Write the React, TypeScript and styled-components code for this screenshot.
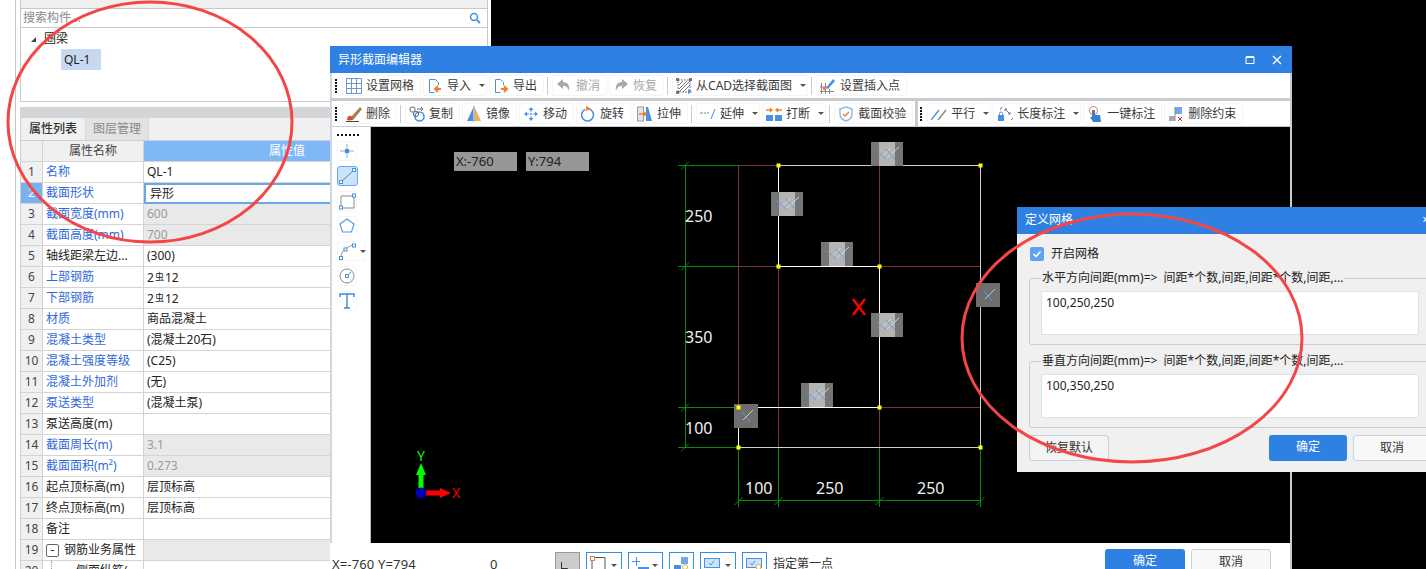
import React from "react";
import styled, { createGlobalStyle } from "styled-components";

const FONT = `"Noto Sans", "Noto Sans CJK SC", sans-serif`;

const Global = createGlobalStyle`
  html, body { margin: 0; padding: 0; height: 100%; overflow: hidden; background: #000; }
  body { font: 12px/20px ${FONT}; color: #222; }
  * { box-sizing: border-box; }
`;

const Page = styled.div`
  position: relative; width: 1426px; height: 569px; overflow: hidden; background: #000; display: flex;
`;
const LeftColumn = styled.div`
  width: 491px; height: 100%; background: #fff; display: flex; flex: none; overflow: hidden;
`;
const Rail = styled.div`
  width: 16px; flex: none; border-right: 1px solid #c4c4c4; margin-right: 4px;
`;
const Panel = styled.div`
  width: 468px; display: flex; flex-direction: column; flex: none;
  & > * { flex: none; }
`;
const TopStrip = styled.div`
  height: 9px; background: #f0f0f0; border: 1px solid #c8c8c8; border-top: 0;
`;
const SearchBar = styled.div`
  height: 19px; display: flex; align-items: center; justify-content: space-between;
  padding: 0 6px 0 2px; border-left: 1px solid #c8c8c8; border-right: 1px solid #c8c8c8; border-bottom: 1px solid #c8c8c8;
  color: #8a8a8a; font-size: 12px;
`;
const Tree = styled.div`
  height: 74px; border: 1px solid #c8c8c8; border-top: 0; padding-top: 1px;
`;
const TreeParent = styled.div`
  height: 20px; display: flex; align-items: center; padding-left: 10px; gap: 8px;
`;
const Triangle = styled.span`
  width: 0; height: 0; border-left: 5px solid transparent; border-bottom: 5px solid #444;
`;
const TreeLeaf = styled.div`
  margin-left: 40px; width: 40px; height: 21px; background: #c8d8f0; padding-left: 3px; line-height: 21px;
`;
const GreyBar = styled.div`
  height: 11px; margin-top: 5px; background: #d4d5d9;
`;
const Tabs = styled.div`
  height: 22px; background: #f0f0f0; display: flex; border-left: 1px solid #d0d0d0;
`;
const Tab = styled.div<{ $active?: boolean }>`
  width: 64px; text-align: center; line-height: 22px; font-weight: ${p => (p.$active ? 500 : 400)};
  background: ${p => (p.$active ? "#f0f0f0" : "#e3e3e3")};
  color: ${p => (p.$active ? "#333" : "#8a8a8a")};
  ${p => (p.$active ? "" : "border-left: 1px solid #d8d8d8; border-right: 1px solid #d8d8d8;")}
`;
const Table = styled.div`
  border-left: 1px solid #d0d0d0; border-top: 1px solid #d0d0d0;
`;
const Row = styled.div`
  display: flex; height: 21px;
`;
const NumCell = styled.div<{ $selected?: boolean }>`
  width: 22px; flex: none; text-align: center; line-height: 20px; color: ${p => (p.$selected ? "#fff" : "#444")};
  background: ${p => (p.$selected ? "#78b2f0" : "#f0f0f0")};
  border-right: 1px solid #d4d4d4; border-bottom: 1px solid #d4d4d4;
`;
const NameCell = styled.div<{ $link?: boolean }>`
  width: 101px; flex: none; padding-left: 3px; white-space: nowrap; overflow: hidden; line-height: 20px;
  color: ${p => (p.$link ? "#3068dc" : "#222")};
  border-right: 1px solid #d4d4d4; border-bottom: 1px solid #d4d4d4;
`;
const ValueCell = styled.div<{ $disabled?: boolean; $selected?: boolean }>`
  flex: 1; padding-left: ${p => (p.$selected ? "4px" : "3px")}; line-height: ${p => (p.$selected ? "17px" : "20px")};
  background: ${p => (p.$disabled ? "#e9e9e9" : "#fff")}; color: ${p => (p.$disabled ? "#9a9a9a" : "#222")};
  border-right: 1px solid #d4d4d4;
  border-bottom: 1px solid #d4d4d4;
  ${p => (p.$selected ? "border: 2px solid #6aa6ea;" : "")}
`;
const HeadName = styled(NameCell)`
  text-align: center; background: #f0f0f0; color: #444; padding-left: 0;
`;
const HeadValue = styled.div`
  flex: 1; background: #7fb8f6; color: #fff; text-align: center; line-height: 20px; padding-right: 58px;
  border-bottom: 1px solid #d4d4d4;
`;
const Rebar = styled.span`
  font-size: 9px; vertical-align: 2px; margin: 0 1px;
`;
const GroupName = styled.div`
  display: flex; align-items: center; gap: 5px; height: 100%; color: #222;
`;
const Collapse = styled.span`
  width: 13px; height: 13px; border: 1px solid #666; border-radius: 2px; display: flex; align-items: center; justify-content: center;
  line-height: 10px;
`;
const ChildName = styled.div`
  margin-left: 5px; padding-left: 24px; border-left: 1px dotted #999; height: 100%; color: #222;
`;

/* editor window */
const Win = styled.div`
  position: absolute; left: 330px; top: 46px; width: 962px; height: 544px; background: #fff;
  display: flex; flex-direction: column; border-right: 2px solid #c8ccd4;
`;
const TitleBar = styled.div`
  height: 27px; flex: none; background: #2e80e2; color: #fff; display: flex; align-items: center; justify-content: space-between;
  padding: 0 8px 0 8px; margin-right: -2px;
`;
const WinControls = styled.div`
  display: flex; gap: 15px; align-items: center; padding-right: 1px;
`;
const Toolbar = styled.div<{ $last?: boolean }>`
  height: ${p => (p.$last ? "26px" : "28px")}; flex: none; display: flex; align-items: center; gap: 2px; background: #fff;
  border-bottom: ${p => (p.$last ? "1px" : "3px")} solid #c9cbcf; padding-left: 3px; border-left: 2px solid #cfd6e4;
`;
const Grip = styled.div`
  width: 2px; height: 14px; margin: 0 3px 0 0; flex: none;
  background: repeating-linear-gradient(to bottom, #111 0 2px, transparent 2px 3px);
`;
const ToolBtn = styled.div`
  height: 21px; display: flex; align-items: center; gap: 4px; padding: 0 6px 0 3px; flex: none; white-space: nowrap;
  border: 1px solid #f5f5f5; border-radius: 3px; color: #3c3c3c;
`;
const DisabledText = styled.span`
  color: #a8a8a8;
`;
const Caret = styled.span`
  width: 0; height: 0; border-left: 3px solid transparent; border-right: 3px solid transparent; border-top: 3px solid #555;
  margin-left: 4px; margin-right: -5px;
`;
const Sep = styled.div<{ $thick?: boolean }>`
  width: ${p => (p.$thick ? "3px" : "1px")}; height: ${p => (p.$thick ? "25px" : "18px")}; background: #c9cbcf; flex: none; margin: ${p => (p.$thick ? "0" : "0 2px 0 1px")};
`;
const Main = styled.div`
  height: 416px; flex: none; display: flex;
`;
const Strip = styled.div`
  width: 41px; flex: none; border-left: 2px solid #cfd6e4; display: flex; flex-direction: column; align-items: flex-start; padding: 7px 0 0 5px; gap: 5px; border-right: 1px solid #bbb;
`;
const StripGrip = styled.div`
  width: 22px; height: 2px; flex: none;
  background: repeating-linear-gradient(to right, #111 0 2px, transparent 2px 4px);
`;
const StripBtn = styled.div<{ $active?: boolean; $wide?: boolean }>`
  width: ${p => (p.$wide ? "29px" : p.$active ? "21px" : "20px")}; height: 20px; flex: none; border-radius: 3px; display: flex; align-items: center;
  border: 1px solid ${p => (p.$active ? "#6aa8ea" : "#f5f5f5")}; background: ${p => (p.$active ? "#cbe4fe" : "#fff")};
`;
const Canvas = styled.svg`
  display: block; flex: 1; height: 416px; background: #000;
`;
const StatusBar = styled.div`
  flex: 1; display: flex; align-items: flex-start; position: relative; padding: 9px 0 0 2px;
`;
const Coord = styled.div`
  width: 158px; flex: none; font-size: 13px; line-height: 20px; padding-top: 2px; color: #333; letter-spacing: .15px;
`;
const Zero = styled.div`
  width: 65px; flex: none; font-size: 13px; line-height: 20px; padding-top: 2px; color: #333;
`;
const StatusBtn = styled.div<{ $w: number; $on?: boolean }>`
  width: ${p => p.$w}px; height: 26px; flex: none; margin-right: 6px; display: flex; align-items: flex-start; justify-content: space-between;
  border: 1px solid ${p => (p.$on ? "#999" : "#2f90ea")}; background: ${p => (p.$on ? "#ccc" : "#fff")};
  padding: 3px 4px 0 3px;
`;
const StatusCaret = styled(Caret)`
  margin: 8px 0 0 0;
`;
const Prompt = styled.div`
  padding-top: 2px; color: #333; white-space: nowrap;
`;
const PrimaryBtn = styled.div`
  width: 80px; height: 26px; border-radius: 3px; background: #2e80e2; color: #fff; text-align: center; line-height: 24px; flex: none;
`;
const SecondaryBtn = styled.div`
  width: 80px; height: 26px; border-radius: 3px; background: #f8f8f8; color: #333; border: 1px solid #c8d0dc; text-align: center; line-height: 24px; flex: none;
`;
const Footer = styled.div`
  position: absolute; top: 6px; right: 19px; display: flex; gap: 6px;
`;

/* dialog */
const Dialog = styled.div`
  position: absolute; left: 1017px; top: 207px; width: 426px; height: 265px; background: #f0f0f0; display: flex; flex-direction: column;
`;
const DialogTitle = styled.div`
  height: 27px; flex: none; background: #2e80e2; color: #fff; padding: 0 14px 0 8px; line-height: 26px; display: flex; justify-content: space-between;
`;
const DialogBody = styled.div`
  padding: 12px 12px 0 12px; display: flex; flex-direction: column;
`;
const CheckRow = styled.div`
  display: flex; align-items: center; gap: 7px; height: 14px; margin: 1px 0 9px 1px; color: #222;
`;
const CheckBox = styled.span`
  width: 14px; height: 14px; background: #5fa3f0; border-radius: 2px; display: flex; align-items: center; justify-content: center;
`;
const Field = styled.fieldset`
  margin: 0 0 8px; padding: 5px 11px 0; height: 75px; border: 1px solid #c8ccd2; border-radius: 3px; min-width: 0;
`;
const Legend = styled.legend`
  padding: 0 1px; margin-left: 0; font-size: 12px; line-height: 16px; color: #222; white-space: nowrap;
`;
const FakeInput = styled.div`
  height: 44px; background: #fff; border: 1px solid #dde2ea; padding: 2px 4px; color: #222; line-height: 18px;
`;
const DialogFooter = styled.div`
  display: flex; align-items: center; height: 26px; margin-top: -1px;
`;
const GhostBtn = styled(SecondaryBtn)`
  background: #f3f3f3;
`;
const DialogActions = styled.div`
  display: flex; gap: 6px; margin-left: auto;
`;
const NarrowPrimary = styled(PrimaryBtn)`
  width: 78px;
`;
const NarrowSecondary = styled(SecondaryBtn)`
  width: 78px;
`;
const Overlay = styled.svg`
  position: absolute; left: 0; top: 0; width: 1426px; height: 569px; pointer-events: none;
`;
const CoordTag = styled.text`
  font: 13px ${FONT}; fill: #222;
`;
const DimText = styled.text`
  font: 16px ${FONT}; fill: #f0f0f0;
`;
const AxisText = styled.text`
  font: 14px ${FONT};
`;

const Svg: React.FC<{ w?: number; h?: number; children: React.ReactNode }> = ({ w = 16, h = 16, children }) => (
  <svg width={w} height={h} viewBox={`0 0 ${w} ${h}`} fill="none" style={{ flex: "none", display: "block" }}>{children}</svg>
);

const BLUE = "#4a90e2", ORANGE = "#f08030";

const icons: Record<string, React.ReactNode> = {
  grid: <Svg><path d="M.5.5h15v15H.5zM5.5.5v15M10.5.5v15M.5 5.5h15M.5 10.5h15" stroke="#6a98cc" /></Svg>,
  imp: <Svg><path d="M11.500 7V4.500l-3-3h-6v13h5" stroke={BLUE} /><path d="M14 11H9M11 8l-3 3 3 3" stroke={ORANGE} strokeWidth="2" /></Svg>,
  exp: <Svg><path d="M10.500 7V4.500l-3-3h-5v13h5" stroke={BLUE} /><path d="M8 11h5M11 8l3 3-3 3" stroke={ORANGE} strokeWidth="2" /></Svg>,
  undo: <Svg><path d="M7 1L1 6l6 5V8c3 0 5 1 6 5 1-5-1-9-6-9z" fill="#a8a8a8" /></Svg>,
  redo: <Svg><path d="M9 1l6 5-6 5V8c-3 0-5 1-6 5-1-5 1-9 6-9z" fill="#a8a8a8" /></Svg>,
  cad: <Svg><path d="M2 2h12v12H2z" stroke="#777" strokeDasharray="2 1" /><path d="M3 7l4-4M3 11l8-8M3 14L14 3M7 14l7-7" stroke="#777" /><rect x="0" y="0" width="3" height="3" fill="#777" /><rect x="13" y="0" width="3" height="3" fill="#777" /><rect x="0" y="13" width="3" height="3" fill="#777" /><path d="M12 11l4 3-4 2z" fill={BLUE} /></Svg>,
  insert: <Svg><path d="M1.500 5v11M5.500 5v11M9.500 11v5M0 9h8M0 13.500h14" stroke="#888" /><path d="M6 10L13 1l2 2-7 8z" fill={BLUE} /><circle cx="4.500" cy="10.500" r="1.800" fill={ORANGE} /></Svg>,
  del: <Svg><path d="M5 11L14 1l2 2-8 10z" fill="#a88050" /><path d="M1 14c0-3 2-5 4-4l3 3c-1 1-4 2-7 1z" fill="#d0502a" /><path d="M0 15.500h13" stroke="#444" /></Svg>,
  copy: <Svg><rect x="1" y="1" width="5" height="5" rx="2" stroke="#666" /><path d="M8 3h6M12 1l2 2-2 2" stroke="#666" /><circle cx="10.500" cy="10.500" r="4.500" stroke={BLUE} strokeWidth="1.600" /><circle cx="7" cy="8" r="2.600" stroke="#666" /></Svg>,
  mirror: <Svg><path d="M7 2v13H1z" fill={BLUE} /><path d="M9 2v13h6z" fill="#f0b050" /><path d="M8 0v16" stroke="#777" /></Svg>,
  move: <Svg><path d="M8 1L5.500 4h5zM8 15l-2.500-3h5zM1 8l3-2.500v5zM15 8l-3-2.500v5z" fill={BLUE} /><path d="M8 4v8M4 8h8" stroke={BLUE} strokeDasharray="2 1" /></Svg>,
  rotate: <Svg><path d="M5 3.500a6 6 0 1 0 4-.4" stroke={BLUE} strokeWidth="1.500" /><path d="M6 0l5 2.500-5 2.500z" fill={ORANGE} /></Svg>,
  stretch: <Svg><rect x=".5" y="1" width="6" height="14" fill="#e4e4e4" stroke="#999" /><path d="M9 1h2l4 14H9z" fill={BLUE} /><path d="M2 8h7M7 6l2 2-2 2" stroke={ORANGE} strokeWidth="1.500" /></Svg>,
  extend: <Svg><path d="M0 7h3M4 7h2M7 7h2" stroke="#7a8aa0" /><path d="M11 13L15 3" stroke={BLUE} /></Svg>,
  brk: <Svg><rect x="0" y="9" width="7" height="6" fill={BLUE} /><rect x="9" y="9" width="7" height="6" fill={BLUE} /><path d="M0 4h6M4 2l2 2-2 2M16 4h-6M12 2l-2 2 2 2" stroke={ORANGE} strokeWidth="1.300" /></Svg>,
  shield: <Svg><path d="M8 1l6 2v5c0 4-3 6-6 7-3-1-6-3-6-7V3z" stroke="#8ab8e8" strokeWidth="1.400" /><path d="M5 8l2 2 4-4" stroke={ORANGE} strokeWidth="1.400" /></Svg>,
  parallel: <Svg><path d="M0 14L8 4" stroke={BLUE} strokeWidth="1.400" /><path d="M7 14l8-10" stroke="#888" strokeWidth="1.400" /></Svg>,
  length: <Svg><rect x="1" y="9" width="6" height="6" fill={BLUE} /><path d="M2.500 9V7.500a1.500 1.500 0 0 1 3 0V9" stroke={BLUE} /><path d="M3 4l2-3M8 3l5 5M8 3l2 0M8 3l0 2M13 8l-2 0M13 8l0-2M14 14l2-2" stroke="#5a7a9a" /></Svg>,
  onekey: <Svg><circle cx="6.500" cy="4.500" r="4" stroke="#f0a080" strokeWidth="1.400" /><path d="M5 4h3v5h5l1 7H6L3 11l2 0z" fill="#3a80d0" /></Svg>,
  unbind: <Svg><rect x="7" y="1" width="7" height="7" fill="#70a8e8" /><path d="M7 1v14" stroke="#888" /><rect x="1" y="10" width="6" height="5" fill="#aaa" /><path d="M10 11l4 4M14 11l-4 4" stroke="#d03020" /></Svg>,
  search: <Svg w={12} h={12}><circle cx="5" cy="5" r="3.500" stroke="#3f8fdc" strokeWidth="1.500" /><path d="M8 8l3 3" stroke="#3f8fdc" strokeWidth="1.800" /></Svg>,
};

const Btn: React.FC<{ icon: string; label: string; caret?: boolean; off?: boolean }> = ({ icon, label, caret, off }) => (
  <ToolBtn>
    {icons[icon]}
    {off ? <DisabledText>{label}</DisabledText> : <span>{label}</span>}
    {caret && <Caret />}
  </ToolBtn>
);

type Prop = { name: string; link?: boolean; value?: React.ReactNode; disabled?: boolean };
const R2 = <>2<Rebar>虫</Rebar>12</>;
const props: Prop[] = [
  { name: "名称", link: true, value: "QL-1" },
  { name: "截面形状", link: true, value: "异形" },
  { name: "截面宽度(mm)", link: true, value: "600", disabled: true },
  { name: "截面高度(mm)", link: true, value: "700", disabled: true },
  { name: "轴线距梁左边...", value: "(300)" },
  { name: "上部钢筋", link: true, value: R2 },
  { name: "下部钢筋", link: true, value: R2 },
  { name: "材质", link: true, value: "商品混凝土" },
  { name: "混凝土类型", link: true, value: "(混凝土20石)" },
  { name: "混凝土强度等级", link: true, value: "(C25)" },
  { name: "混凝土外加剂", link: true, value: "(无)" },
  { name: "泵送类型", link: true, value: "(混凝土泵)" },
  { name: "泵送高度(m)" },
  { name: "截面周长(m)", link: true, value: "3.1", disabled: true },
  { name: "截面面积(m²)", link: true, value: "0.273", disabled: true },
  { name: "起点顶标高(m)", value: "层顶标高" },
  { name: "终点顶标高(m)", value: "层顶标高" },
  { name: "备注" },
];

const GREEN = "#0a8a0a", DARKRED = "#7a3636", SHAPE = "#fff";
const xs = [738, 778, 879, 980];
const ys = [165, 266, 407, 447];
const doubles: [number, number][] = [[871, 142], [771, 192], [821, 242], [871, 313], [801, 383]];
const singles: [number, number][] = [[976, 283], [734, 404]];

const Tick: React.FC<{ x: number; y: number }> = ({ x, y }) => (
  <path d={`M${x - 4} ${y + 4}L${x + 4} ${y - 4}`} stroke={GREEN} />
);

const Drawing = () => (
  <Canvas viewBox="371 127 919 416">
    <rect x="454" y="152" width="63" height="19" fill="#969696" />
    <rect x="526" y="152" width="63" height="19" fill="#969696" />
    <CoordTag x="456" y="166">X:-760</CoordTag>
    <CoordTag x="528" y="166">Y:794</CoordTag>
    <g stroke={DARKRED} fill="none" shapeRendering="crispEdges">
      {xs.slice(0, 3).map(x => <path key={x} d={`M${x + 0.5} 165V447`} />)}
      <path d="M738 165.500H778M738 266.500H980M879 407.500H980" />
    </g>
    <g stroke={GREEN} fill="none" shapeRendering="crispEdges">
      <path d="M685.500 165V447" />
      {ys.map(y => <path key={y} d={`M678 ${y + 0.5}H738`} />)}
      {xs.map(x => <path key={x} d={`M${x + 0.5} 447V507`} />)}
      <path d="M738 500.500H980" />
    </g>
    {ys.map(y => <Tick key={y} x={685} y={y + 0.5} />)}
    {xs.map(x => <Tick key={x} x={x + 0.5} y={501} />)}
    <g shapeRendering="crispEdges" fill="none">
      <path d="M778.500 165V266.500H879.500V407.500H738.500V447" stroke={SHAPE} />
      <path d="M778 165.500H980.500V447.500H738" stroke="#d0d0d0" />
    </g>
    {doubles.map(([x, y]) => (
      <g key={x + "-" + y}>
        <rect x={x} y={y} width="32" height="24" fill="#757575" />
        <rect x={x + 8} y={y} width="16" height="24" fill="#b4b4b4" />
        <path d={`M${x + 20} ${y + 6}L${x + 11.500} ${y + 14}M${x + 28} ${y + 5}L${x + 16} ${y + 16}`} stroke="#d8d8d8" />
        <path d={`M${x + 6} ${y + 9}l9 8M${x + 15} ${y + 7}l9 10`} stroke="#5a9ee0" />
      </g>
    ))}
    {singles.map(([x, y]) => (
      <g key={x + "-" + y}>
        <rect x={x} y={y} width="24" height="24" fill="#6e6e6e" />
        <path d={`M${x + 9} ${y + 16}l10-10`} stroke="#c8c8c8" />
        <path d={`M${x + 8} ${y + 8}l8 10`} stroke="#5a9ee0" />
      </g>
    ))}
    {[[778.5, 165.5], [980.5, 165.5], [778.5, 266.5], [879.5, 266.5], [879.5, 407.5], [738.5, 407.5], [738.5, 447.5], [980.5, 447.5]].map(([x, y]) => (
      <rect key={x + "," + y} x={x - 2} y={y - 2} width="4" height="4" fill="#ff0" />
    ))}
    <path d="M853 299l12 16M865 299l-12 16" stroke="#f00" strokeWidth="2.500" />
    <DimText x="685" y="222">250</DimText>
    <DimText x="685" y="343">350</DimText>
    <DimText x="685" y="434">100</DimText>
    <DimText x="745" y="494">100</DimText>
    <DimText x="816" y="494">250</DimText>
    <DimText x="917" y="494">250</DimText>
    <path d="M421 463l5 12h-5h-5zM418.500 475h5v13h-5z" fill="#0f0" />
    <path d="M425 490.500h15v-2.500l11 5-11 5v-2.500h-15z" fill="#f00" />
    <circle cx="421" cy="493" r="5.500" fill="#0000b0" />
    <AxisText x="417" y="461" fill="#0f0">Y</AxisText>
    <AxisText x="452" y="498" fill="#f00">X</AxisText>
  </Canvas>
);

const Tools = () => (
  <Strip>
    <StripGrip />
    <StripBtn><Svg w={18} h={18}><path d="M9 2v4M9 12v4M2 9h4M12 9h4" stroke="#aaa" /><circle cx="9" cy="9" r="2.500" fill={BLUE} /></Svg></StripBtn>
    <StripBtn $active><Svg w={19} h={18}><path d="M3 15L16 3" stroke="#777" /><rect x="1.500" y="13.500" width="3" height="3" fill="#fff" stroke={BLUE} /><rect x="14.500" y="1.500" width="3" height="3" fill="#fff" stroke={BLUE} /></Svg></StripBtn>
    <StripBtn><Svg w={18} h={18}><path d="M3 4h13v12H3z" stroke="#888" /><rect x="1.500" y="14" width="3" height="3" fill="#fff" stroke={BLUE} /><rect x="14.500" y="2" width="3" height="3" fill="#fff" stroke={BLUE} /></Svg></StripBtn>
    <StripBtn><Svg w={18} h={18}><path d="M9 2l7 5-2.500 8h-9L2 7z" stroke="#5a9ae4" strokeWidth="1.200" /></Svg></StripBtn>
    <StripBtn $wide><Svg w={18} h={18}><path d="M3 16C3 10 6 6 15 3" stroke="#999" /><rect x="1.500" y="14.500" width="3" height="3" fill="#fff" stroke={BLUE} /><rect x="6" y="6" width="3" height="3" fill="#fff" stroke={BLUE} /><rect x="14.500" y="2" width="3" height="3" fill="#fff" stroke={BLUE} /></Svg><Caret /></StripBtn>
    <StripBtn><Svg w={18} h={18}><circle cx="9" cy="9" r="7" stroke="#888" /><path d="M9 9l4-4" stroke={BLUE} /><rect x="7.500" y="7.500" width="3" height="3" fill="#fff" stroke={BLUE} /></Svg></StripBtn>
    <StripBtn><Svg w={18} h={18}><path d="M2 5V2h14v3M9 2v14M6 16h6" stroke="#3f86d8" strokeWidth="1.400" /></Svg></StripBtn>
  </Strip>
);

export default function App() {
  return (
    <Page>
      <Global />
      <LeftColumn>
        <Rail />
        <Panel>
          <TopStrip />
          <SearchBar><span>搜索构件...</span>{icons.search}</SearchBar>
          <Tree>
            <TreeParent><Triangle /><span>圈梁</span></TreeParent>
            <TreeLeaf>QL-1</TreeLeaf>
          </Tree>
          <GreyBar />
          <Tabs><Tab $active>属性列表</Tab><Tab>图层管理</Tab></Tabs>
          <Table>
            <Row><NumCell /><HeadName>属性名称</HeadName><HeadValue>属性值</HeadValue></Row>
            {props.map((p, i) => (
              <Row key={i}>
                <NumCell $selected={i === 1}>{i + 1}</NumCell>
                <NameCell $link={p.link}>{p.name}</NameCell>
                <ValueCell $disabled={p.disabled} $selected={i === 1}>{p.value}</ValueCell>
              </Row>
            ))}
            <Row>
              <NumCell>19</NumCell>
              <NameCell><GroupName><Collapse>-</Collapse>钢筋业务属性</GroupName></NameCell>
              <ValueCell $disabled />
            </Row>
            <Row>
              <NumCell>20</NumCell>
              <NameCell><ChildName>侧面纵筋(</ChildName></NameCell>
              <ValueCell />
            </Row>
          </Table>
        </Panel>
      </LeftColumn>

      <Win>
        <TitleBar>
          <span>异形截面编辑器</span>
          <WinControls>
            <Svg w={12} h={12}><path d="M2 3h8v6.500H2z" stroke="#fff" /><path d="M2 3h8" stroke="#fff" strokeWidth="2" /></Svg>
            <Svg w={12} h={12}><path d="M2 2l8 8M10 2l-8 8" stroke="#fff" strokeWidth="1.300" /></Svg>
          </WinControls>
        </TitleBar>
        <Toolbar>
          <Grip />
          <Btn icon="grid" label="设置网格" />
          <Btn icon="imp" label="导入" caret />
          <Btn icon="exp" label="导出" />
          <Sep />
          <Btn icon="undo" label="撤消" off />
          <Btn icon="redo" label="恢复" off />
          <Sep />
          <Btn icon="cad" label="从CAD选择截面图" caret />
          <Sep />
          <Btn icon="insert" label="设置插入点" />
        </Toolbar>
        <Toolbar $last>
          <Grip />
          <Btn icon="del" label="删除" />
          <Sep />
          <Btn icon="copy" label="复制" />
          <Btn icon="mirror" label="镜像" />
          <Btn icon="move" label="移动" />
          <Btn icon="rotate" label="旋转" />
          <Btn icon="stretch" label="拉伸" />
          <Sep />
          <Btn icon="extend" label="延伸" caret />
          <Btn icon="brk" label="打断" caret />
          <Sep />
          <Btn icon="shield" label="截面校验" />
          <Sep $thick />
          <Grip />
          <Btn icon="parallel" label="平行" caret />
          <Btn icon="length" label="长度标注" caret />
          <Btn icon="onekey" label="一键标注" />
          <Btn icon="unbind" label="删除约束" />
        </Toolbar>
        <Main>
          <Tools />
          <Drawing />
        </Main>
        <StatusBar>
          <Coord>X=-760 Y=794</Coord>
          <Zero>0</Zero>
          <StatusBtn $w={25} $on><Svg w={12} h={20}><path d="M2.500 6v14M2.500 12.500h6V20" stroke="#333" /></Svg></StatusBtn>
          <StatusBtn $w={36}><Svg w={18} h={20}><path d="M2 1.500h13V20M2 1.500V20" stroke="#555" /><rect x=".5" y=".5" width="4" height="4" fill="#fff" stroke={ORANGE} /></Svg><StatusCaret /></StatusBtn>
          <StatusBtn $w={35}><Svg w={18} h={20}><path d="M0 5.500h8M4.500 1v9" stroke={BLUE} /><rect x="6" y="11" width="11" height="6" fill={BLUE} /></Svg><StatusCaret /></StatusBtn>
          <StatusBtn $w={25}><Svg w={17} h={20}><rect x="8" y="1" width="7" height="7" fill="#70a8e8" /><rect x="1" y="9" width="7" height="5" fill={BLUE} /><circle cx="12" cy="11" r="2.500" stroke="#e8b030" /></Svg></StatusBtn>
          <StatusBtn $w={36}><Svg w={17} h={20}><rect x=".5" y="2.500" width="15" height="9" fill="#cfe2f8" stroke={BLUE} /><path d="M5 7l2 2 3-4" stroke={BLUE} /></Svg><StatusCaret /></StatusBtn>
          <StatusBtn $w={25}><Svg w={17} h={20}><rect x=".5" y="2.500" width="15" height="9" fill="#cfe2f8" stroke={BLUE} /><path d="M4 7l2 2 3-4" stroke={BLUE} /><circle cx="12.500" cy="11" r="2.500" fill="#fff" stroke="#e8b030" /></Svg></StatusBtn>
          <Prompt>指定第一点</Prompt>
          <Footer><PrimaryBtn>确定</PrimaryBtn><SecondaryBtn>取消</SecondaryBtn></Footer>
        </StatusBar>
      </Win>

      <Dialog>
        <DialogTitle><span>定义网格</span><span>×</span></DialogTitle>
        <DialogBody>
          <CheckRow>
            <CheckBox><Svg w={10} h={10}><path d="M1.500 5l2.500 2.500 4.500-5" stroke="#fff" strokeWidth="1.600" /></Svg></CheckBox>
            开启网格
          </CheckRow>
          <Field>
            <Legend>水平方向间距(mm)=&gt;&nbsp; 间距*个数,间距,间距*个数,间距,...</Legend>
            <FakeInput>100,250,250</FakeInput>
          </Field>
          <Field>
            <Legend>垂直方向间距(mm)=&gt;&nbsp; 间距*个数,间距,间距*个数,间距,...</Legend>
            <FakeInput>100,350,250</FakeInput>
          </Field>
          <DialogFooter>
            <GhostBtn>恢复默认</GhostBtn>
            <DialogActions><NarrowPrimary>确定</NarrowPrimary><NarrowSecondary>取消</NarrowSecondary></DialogActions>
          </DialogFooter>
        </DialogBody>
      </Dialog>

      <Overlay viewBox="0 0 1426 569">
        <ellipse cx="150" cy="122" rx="142" ry="120" fill="none" stroke="#f44646" strokeWidth="3" />
        <ellipse cx="1132" cy="338" rx="170" ry="124" fill="none" stroke="#f44646" strokeWidth="3" />
      </Overlay>
    </Page>
  );
}
